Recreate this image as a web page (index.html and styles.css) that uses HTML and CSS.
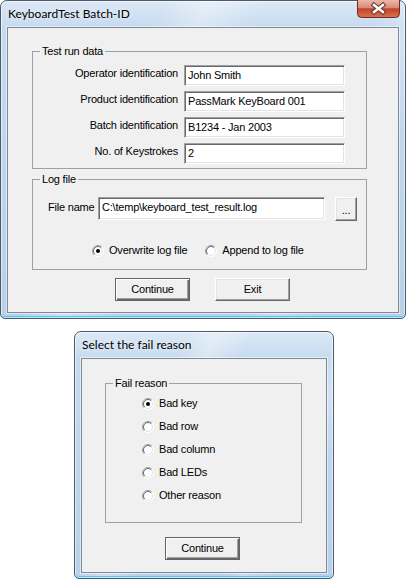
FILE: index.html
```html
<!DOCTYPE html>
<html>
<head>
<meta charset="utf-8">
<link rel="stylesheet" href="styles.css">
</head>
<body>
<div class="desk">
  <section class="win win-main">
    <header class="titlebar">
      <span class="title">KeyboardTest Batch-ID</span>
      <svg class="close" width="43" height="18" viewBox="0 0 43 18">
        <defs>
          <linearGradient id="cg" x1="0" y1="0" x2="0" y2="1">
            <stop offset="0" stop-color="#eab8aa"/>
            <stop offset="0.45" stop-color="#d98a76"/>
            <stop offset="0.5" stop-color="#c2432a"/>
            <stop offset="1" stop-color="#d9744f"/>
          </linearGradient>
        </defs>
        <path d="M0.5 0 V13.5 A4 4 0 0 0 4.5 17.5 H38.5 A4 4 0 0 0 42.5 13.5 V0" fill="url(#cg)" stroke="#6e2c22"/>
        <path d="M17 5 L26 12 M26 5 L17 12" stroke="#6a3b33" stroke-width="4.6" stroke-linecap="square" fill="none"/>
        <path d="M17 5 L26 12 M26 5 L17 12" stroke="#ffffff" stroke-width="2.4" stroke-linecap="square" fill="none"/>
      </svg>
    </header>
    <div class="client client-main">
      <div class="group group-run">
        <span class="group-label">Test run data</span>
        <div class="form-grid">
          <span class="lbl">Operator identification</span><div class="field">John Smith</div>
          <span class="lbl">Product identification</span><div class="field">PassMark KeyBoard 001</div>
          <span class="lbl">Batch identification</span><div class="field">B1234 - Jan 2003</div>
          <span class="lbl">No. of Keystrokes</span><div class="field">2</div>
        </div>
      </div>
      <div class="group group-log">
        <span class="group-label">Log file</span>
        <div class="file-row">
          <span class="file-lbl">File name</span>
          <div class="field field-file">C:\temp\keyboard_test_result.log</div>
          <div class="btn btn-browse">...</div>
        </div>
        <div class="radio-row">
          <span class="opt">
            <svg class="radio" width="12" height="12" viewBox="0 0 12 12"><circle cx="6" cy="6" r="5.5" fill="#fff"/><path d="M2.1 9.9 A5.5 5.5 0 0 1 9.9 2.1" stroke="#a0a0a0" fill="none"/><path d="M9.9 2.1 A5.5 5.5 0 0 1 2.1 9.9" stroke="#ffffff" fill="none"/><path d="M2.8 9.2 A4.5 4.5 0 0 1 9.2 2.8" stroke="#696969" fill="none"/><path d="M9.2 2.8 A4.5 4.5 0 0 1 2.8 9.2" stroke="#e3e3e3" fill="none"/><circle cx="6" cy="6" r="2" fill="#000"/></svg>
            Overwrite log file
          </span>
          <span class="opt">
            <svg class="radio" width="12" height="12" viewBox="0 0 12 12"><circle cx="6" cy="6" r="5.5" fill="#fff"/><path d="M2.1 9.9 A5.5 5.5 0 0 1 9.9 2.1" stroke="#a0a0a0" fill="none"/><path d="M9.9 2.1 A5.5 5.5 0 0 1 2.1 9.9" stroke="#ffffff" fill="none"/><path d="M2.8 9.2 A4.5 4.5 0 0 1 9.2 2.8" stroke="#696969" fill="none"/><path d="M9.2 2.8 A4.5 4.5 0 0 1 2.8 9.2" stroke="#e3e3e3" fill="none"/></svg>
            Append to log file
          </span>
        </div>
      </div>
      <div class="btn-row">
        <div class="btn btn-default">Continue</div>
        <div class="btn">Exit</div>
      </div>
    </div>
  </section>

  <section class="win win-fail">
    <header class="titlebar">
      <span class="title">Select the fail reason</span>
    </header>
    <div class="client client-fail">
      <div class="group group-fail">
        <span class="group-label">Fail reason</span>
        <div class="radio-col">
          <span class="opt">
            <svg class="radio" width="12" height="12" viewBox="0 0 12 12"><circle cx="6" cy="6" r="5.5" fill="#fff"/><path d="M2.1 9.9 A5.5 5.5 0 0 1 9.9 2.1" stroke="#a0a0a0" fill="none"/><path d="M9.9 2.1 A5.5 5.5 0 0 1 2.1 9.9" stroke="#ffffff" fill="none"/><path d="M2.8 9.2 A4.5 4.5 0 0 1 9.2 2.8" stroke="#696969" fill="none"/><path d="M9.2 2.8 A4.5 4.5 0 0 1 2.8 9.2" stroke="#e3e3e3" fill="none"/><circle cx="6" cy="6" r="2" fill="#000"/></svg>
            Bad key
          </span>
          <span class="opt">
            <svg class="radio" width="12" height="12" viewBox="0 0 12 12"><circle cx="6" cy="6" r="5.5" fill="#fff"/><path d="M2.1 9.9 A5.5 5.5 0 0 1 9.9 2.1" stroke="#a0a0a0" fill="none"/><path d="M9.9 2.1 A5.5 5.5 0 0 1 2.1 9.9" stroke="#ffffff" fill="none"/><path d="M2.8 9.2 A4.5 4.5 0 0 1 9.2 2.8" stroke="#696969" fill="none"/><path d="M9.2 2.8 A4.5 4.5 0 0 1 2.8 9.2" stroke="#e3e3e3" fill="none"/></svg>
            Bad row
          </span>
          <span class="opt">
            <svg class="radio" width="12" height="12" viewBox="0 0 12 12"><circle cx="6" cy="6" r="5.5" fill="#fff"/><path d="M2.1 9.9 A5.5 5.5 0 0 1 9.9 2.1" stroke="#a0a0a0" fill="none"/><path d="M9.9 2.1 A5.5 5.5 0 0 1 2.1 9.9" stroke="#ffffff" fill="none"/><path d="M2.8 9.2 A4.5 4.5 0 0 1 9.2 2.8" stroke="#696969" fill="none"/><path d="M9.2 2.8 A4.5 4.5 0 0 1 2.8 9.2" stroke="#e3e3e3" fill="none"/></svg>
            Bad column
          </span>
          <span class="opt">
            <svg class="radio" width="12" height="12" viewBox="0 0 12 12"><circle cx="6" cy="6" r="5.5" fill="#fff"/><path d="M2.1 9.9 A5.5 5.5 0 0 1 9.9 2.1" stroke="#a0a0a0" fill="none"/><path d="M9.9 2.1 A5.5 5.5 0 0 1 2.1 9.9" stroke="#ffffff" fill="none"/><path d="M2.8 9.2 A4.5 4.5 0 0 1 9.2 2.8" stroke="#696969" fill="none"/><path d="M9.2 2.8 A4.5 4.5 0 0 1 2.8 9.2" stroke="#e3e3e3" fill="none"/></svg>
            Bad LEDs
          </span>
          <span class="opt">
            <svg class="radio" width="12" height="12" viewBox="0 0 12 12"><circle cx="6" cy="6" r="5.5" fill="#fff"/><path d="M2.1 9.9 A5.5 5.5 0 0 1 9.9 2.1" stroke="#a0a0a0" fill="none"/><path d="M9.9 2.1 A5.5 5.5 0 0 1 2.1 9.9" stroke="#ffffff" fill="none"/><path d="M2.8 9.2 A4.5 4.5 0 0 1 9.2 2.8" stroke="#696969" fill="none"/><path d="M9.2 2.8 A4.5 4.5 0 0 1 2.8 9.2" stroke="#e3e3e3" fill="none"/></svg>
            Other reason
          </span>
        </div>
      </div>
      <div class="btn-row btn-row-fail">
        <div class="btn btn-default">Continue</div>
      </div>
    </div>
  </section>
</div>
</body>
</html>
```

FILE: styles.css
```css
html, body {
  margin: 0;
  padding: 0;
  background: #ffffff;
}

body {
  font-family: "Liberation Sans", Arial, sans-serif;
  font-size: 11px;
  color: #000;
}

.desk {
  display: flex;
  flex-direction: column;
  align-items: flex-start;
}

.win {
  box-sizing: border-box;
  display: flex;
  flex-direction: column;
  border: 1px solid #4b5a6b;
  border-radius: 7px 7px 5px 5px;
  padding: 0 6px 5px 6px;
  background:
    linear-gradient(115deg, rgba(255,255,255,0) 30%, rgba(255,255,255,0.35) 38%, rgba(255,255,255,0) 48%, rgba(255,255,255,0) 70%, rgba(255,255,255,0.25) 76%, rgba(255,255,255,0) 84%),
    linear-gradient(180deg, #dce9f6 0px, #c6daef 26px, #b9d0ea 100%);
  box-shadow: inset 0 0 0 1px rgba(255,255,255,0.6), inset 0 -2px 0 #5cc6ef;
}

.win-main {
  width: 406px;
  height: 319px;
}

.win-fail {
  width: 260px;
  height: 248px;
  margin: 12px 0 0 74px;
}

.titlebar {
  height: 26px;
  display: flex;
  justify-content: space-between;
  align-items: flex-start;
  padding-left: 1px;
}

.title {
  font-family: Lato, "Liberation Sans", sans-serif;
  font-size: 12px;
  line-height: 26px;
  color: #000;
  text-shadow: 0 0 6px rgba(255,255,255,0.9);
}

.close {
  display: block;
  margin-right: -1px;
  margin-top: -1px;
}

.client {
  flex: 1;
  background: #f0f0f0;
  border: 1px solid #7d8b99;
  box-shadow: 0 0 0 1px rgba(255,255,255,0.5);
  letter-spacing: -0.2px;
}

.group {
  position: relative;
  box-sizing: border-box;
  border: 1px solid #a0a0a0;
}

.group-label {
  position: absolute;
  top: -7px;
  left: 7px;
  padding: 0 2px;
  background: #f0f0f0;
  line-height: 13px;
}

.group-run {
  width: 335px;
  height: 118px;
  margin: 23px 0 0 24px;
  padding-top: 13px;
}

.form-grid {
  display: grid;
  grid-template-columns: 145px 161px;
  grid-auto-rows: 21px;
  column-gap: 6px;
  row-gap: 5px;
}

.lbl {
  text-align: right;
  line-height: 17px;
  white-space: nowrap;
}

.field {
  box-sizing: border-box;
  height: 21px;
  background: #fff;
  border: 1px solid;
  border-color: #a0a0a0 #ffffff #ffffff #a0a0a0;
  box-shadow: inset 1px 1px 0 #696969, inset -1px -1px 0 #e3e3e3;
  padding: 0 3px;
  line-height: 19px;
  white-space: nowrap;
}

.group-log {
  width: 335px;
  height: 91px;
  margin: 10px 0 0 24px;
  padding: 17px 0 0 15px;
}

.file-row {
  display: flex;
  align-items: flex-start;
}

.file-lbl {
  line-height: 19px;
  margin-top: 1px;
  width: 50px;
}

.field-file {
  width: 227px;
  height: 23px;
}

.btn {
  box-sizing: border-box;
  width: 75px;
  height: 23px;
  background: #f0f0f0;
  border: 1px solid;
  border-color: #ffffff #696969 #696969 #ffffff;
  box-shadow: inset -1px -1px 0 #a0a0a0, inset 1px 1px 0 #e3e3e3;
  text-align: center;
  line-height: 21px;
}

.btn-default {
  border-color: #646464;
  box-shadow: inset 1px 1px 0 #ffffff, inset -1px -1px 0 #696969, inset -2px -2px 0 #a0a0a0;
}

.btn-browse {
  width: 22px;
  height: 24px;
  margin-left: 10px;
  line-height: 24px;
}

.radio-row {
  display: flex;
  gap: 18px;
  margin: 23px 0 0 44px;
}

.opt {
  display: flex;
  align-items: center;
  gap: 5px;
  line-height: 13px;
  white-space: nowrap;
}

.radio {
  display: block;
  flex: none;
}

.btn-row {
  display: flex;
  gap: 25px;
  margin: 8px 0 0 107px;
}

.group-fail {
  width: 197px;
  height: 140px;
  margin: 24px 0 0 23px;
  padding: 13px 0 0 36px;
}

.radio-col {
  display: flex;
  flex-direction: column;
  align-items: flex-start;
  gap: 10px;
}

.btn-row-fail {
  margin: 14px 0 0 83px;
}
```
